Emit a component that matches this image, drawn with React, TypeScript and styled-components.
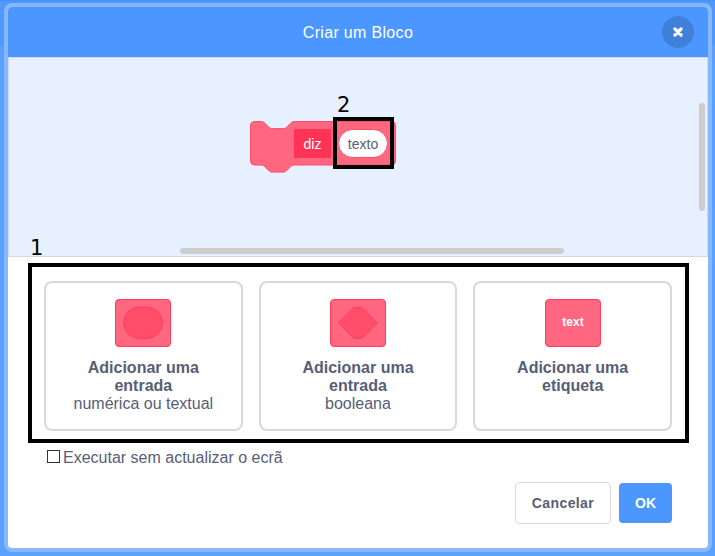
import React from "react";
import styled, { createGlobalStyle } from "styled-components";

const GlobalStyle = createGlobalStyle`
  * { box-sizing: border-box; }
  body {
    margin: 0;
    background: #5b9fff;
    font-family: "Liberation Sans", Arial, sans-serif;
    font-size: 16px;
    color: #575e75;
  }
`;

const Backdrop = styled.div`
  width: 715px;
  height: 556px;
  padding: 3px 3px 4px 4px;
  overflow: hidden;
  background: linear-gradient(#4590f9 0 1px, #4f98ff 1px 45px, #5b9fff 45px);
`;

const Modal = styled.div`
  height: 549px;
  border: 4px solid #87b7ff;
  border-radius: 8px;
  background: #87b7ff;
`;

const ModalInner = styled.div`
  display: flex;
  flex-direction: column;
  height: 541px;
  border-radius: 4px;
  overflow: hidden;
  background: #fff;
`;

const Header = styled.header`
  display: grid;
  grid-template-columns: 1fr auto 1fr;
  align-items: center;
  flex: 0 0 50px;
  padding-right: 14px;
  background: #4c97ff;
  color: #fff;
`;

const Title = styled.h1`
  grid-column: 2;
  margin: 2px -14px 0 0;
  font-size: 16px;
  font-weight: 400;
  letter-spacing: 0.32px;
`;

const CloseButton = styled.button`
  display: grid;
  place-items: center;
  justify-self: end;
  width: 32px;
  height: 32px;
  padding: 0;
  border: 0;
  border-radius: 50%;
  background: #4180d9;
`;

const Workspace = styled.section`
  position: relative;
  flex: 0 0 200px;
  border: 1px solid #d0d7e5;
  background: #e6f0ff;
`;

const BlockDrawing = styled.svg`
  position: absolute;
  left: 240px;
  top: 62px;
  font-size: 14px;
`;

const Scrollbar = styled.div<{ $vertical?: boolean }>`
  position: absolute;
  border-radius: 3px;
  background: #cecdce;
  ${(p) =>
    p.$vertical
      ? "right: 2px; top: 45px; width: 6px; height: 108px;"
      : "left: 171px; bottom: 2px; width: 384px; height: 6px;"}
`;

const Callout = styled.div<{ $x: number; $y: number; $w: number; $h: number }>`
  position: absolute;
  left: ${(p) => p.$x}px;
  top: ${(p) => p.$y}px;
  width: ${(p) => p.$w}px;
  height: ${(p) => p.$h}px;
  border: 4px solid #000;
  pointer-events: none;
`;

const CalloutNumber = styled.span<{ $x: number; $y: number }>`
  position: absolute;
  left: ${(p) => p.$x}px;
  top: ${(p) => p.$y}px;
  font: 21px/24px "DejaVu Sans", sans-serif;
  color: #000;
`;

const Body = styled.div`
  position: relative;
  padding: 24px 36px 0;
`;

const Options = styled.div`
  display: grid;
  grid-template-columns: repeat(3, 1fr);
  gap: 16px;
`;

const Option = styled.div`
  display: flex;
  flex-direction: column;
  align-items: center;
  height: 150px;
  padding: 16px 14px 0;
  border: 2px solid #d9d9d9;
  border-radius: 8px;
  text-align: center;
  line-height: 18px;
`;

const OptionIcon = styled.svg`
  flex: none;
  margin-bottom: 12px;
  font-size: 12px;
  font-weight: 700;
`;

const OptionTitle = styled.div`
  width: 130px;
  font-weight: 700;
`;

const CheckRow = styled.label`
  display: flex;
  align-items: center;
  gap: 3px;
  margin: 17px 0 0 3px;
  height: 20px;
`;

const Checkbox = styled.input`
  appearance: none;
  width: 13px;
  height: 13px;
  margin: 0 0 3px;
  border: 1px solid #333;
  background: #fff;
`;

const Actions = styled.div`
  display: flex;
  justify-content: flex-end;
  align-items: center;
  gap: 8px;
  margin-top: 14px;
`;

const Button = styled.button<{ $primary?: boolean }>`
  width: ${(p) => (p.$primary ? 53 : 96)}px;
  height: ${(p) => (p.$primary ? 40 : 42)}px;
  padding: 0;
  border: ${(p) => (p.$primary ? "0" : "1px solid #d9d9d9")};
  border-radius: 4px;
  background: ${(p) => (p.$primary ? "#4c97ff" : "#fff")};
  color: ${(p) => (p.$primary ? "#fff" : "#575e75")};
  font: 700 14px "Liberation Sans", Arial, sans-serif;
  letter-spacing: ${(p) => (p.$primary ? "0" : "0.4px")};
`;

type Kind = "round" | "boolean" | "label";

const options: { kind: Kind; title: string; detail?: string }[] = [
  { kind: "round", title: "Adicionar uma entrada", detail: "numérica ou textual" },
  { kind: "boolean", title: "Adicionar uma entrada", detail: "booleana" },
  { kind: "label", title: "Adicionar uma etiqueta" },
];

const InputIcon = ({ kind }: { kind: Kind }) => (
  <OptionIcon width="56" height="48">
    <rect x=".5" y=".5" width="55" height="47" rx="3.5" fill="#ff6680" stroke="#ff3d5e" />
    {kind === "round" && (
      <rect x="8.5" y="8" width="39" height="31.5" rx="15.75" fill="#ff4d6a" stroke="#ff3d5e" />
    )}
    {kind === "boolean" && (
      <path d="M8.5 24 24 8.5h8L47.5 24 32 39.5h-8Z" fill="#ff4d6a" stroke="#ff3d5e" />
    )}
    {kind === "label" && (
      <text x="28" y="27" textAnchor="middle" fill="#fff">text</text>
    )}
  </OptionIcon>
);

export default function App() {
  return (
    <Backdrop>
      <GlobalStyle />
      <Modal>
        <ModalInner>
          <Header>
            <Title>Criar um Bloco</Title>
            <CloseButton aria-label="Fechar">
              <svg width="10" height="10" viewBox="0 0 10 10">
                <path d="m2 2 6 6M8 2 2 8" stroke="#fff" strokeWidth="3.2" strokeLinecap="round" />
              </svg>
            </CloseButton>
          </Header>
          <Workspace>
            <BlockDrawing width="150" height="56">
              <path
                d="M1.5 5.5a4 4 0 0 1 4-4h6.5c2 0 3 .8 4 1.8l3.5 3.5c1 1.2 2 1.8 4 1.8h10.500c2 0 3-.6 4-1.800l3.500-3.500c1-1 2-1.800 4-1.800h97a4 4 0 0 1 4 4v35.500a4 4 0 0 1-4 4h-97c-2 0-3 .8-4 1.800l-3.500 3.500c-1 1.200-2 1.800-4 1.800h-10.500c-2 0-3-.6-4-1.800l-3.500-3.500c-1-1-2-1.800-4-1.800h-6.500a4 4 0 0 1-4-4Z"
                fill="#ff6680"
                stroke="#ff4d6a"
              />
              <rect x="45" y="9" width="37" height="29" fill="#ff3355" />
              <text x="63.500" y="29" textAnchor="middle" fill="#fff">diz</text>
              <rect x="89.500" y="9.500" width="49" height="28" rx="14" fill="#fff" stroke="#ff4d6a" />
              <text x="114" y="29" textAnchor="middle" fill="#575e75">texto</text>
            </BlockDrawing>
            <Scrollbar $vertical />
            <Scrollbar />
            <Callout $x={324} $y={59} $w={61} $h={52} />
            <CalloutNumber $x={328} $y={35}>2</CalloutNumber>
            <CalloutNumber $x={21} $y={178}>1</CalloutNumber>
          </Workspace>
          <Body>
            <Options>
              {options.map((o) => (
                <Option key={o.kind}>
                  <InputIcon kind={o.kind} />
                  <OptionTitle>{o.title}</OptionTitle>
                  {o.detail && <div>{o.detail}</div>}
                </Option>
              ))}
            </Options>
            <Callout $x={20} $y={6} $w={661} $h={180} />
            <CheckRow>
              <Checkbox type="checkbox" />
              Executar sem actualizar o ecrã
            </CheckRow>
            <Actions>
              <Button>Cancelar</Button>
              <Button $primary>OK</Button>
            </Actions>
          </Body>
        </ModalInner>
      </Modal>
    </Backdrop>
  );
}
